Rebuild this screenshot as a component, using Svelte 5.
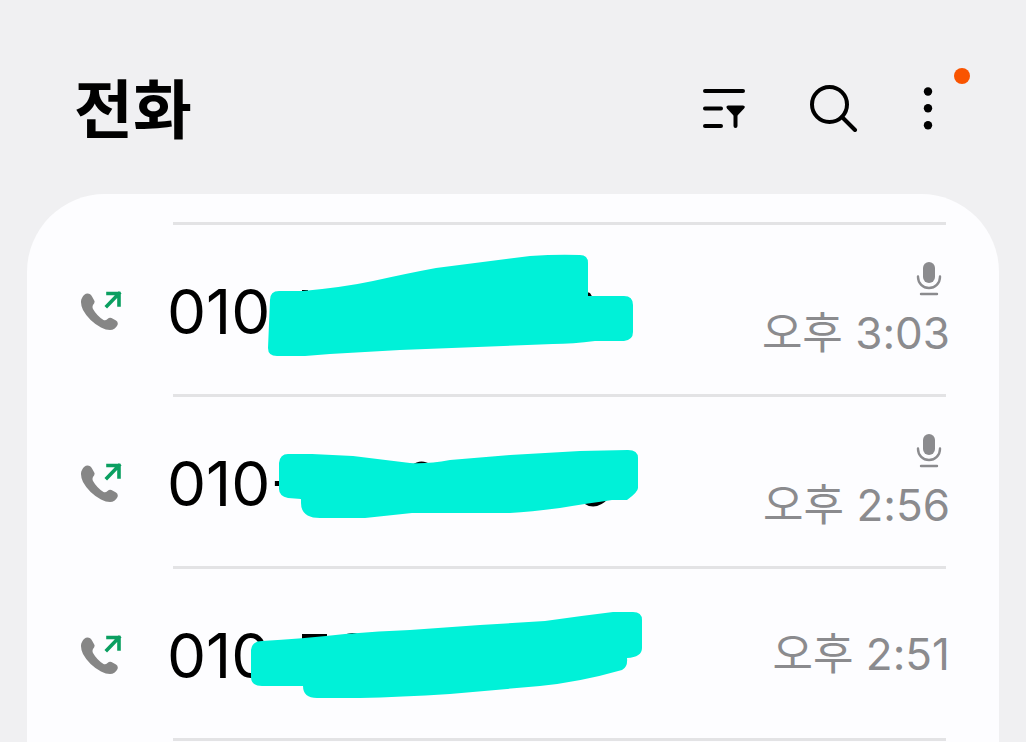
<script>
  const calls = [
    {
      id: 1,
      number: '010-',
      time: '오후 3:03',
      recorded: true,
      traces: 'M129 68H135V72H129Z M414 70L417 71L420 76H414Z',
      mask: 'M97 78Q97 69 106 69H130Q172 65 200 59Q236 51 263 46L357 34Q385 32 407 33Q415 33 415 41V74H451Q460 74 460 83V110Q460 118 451 119H422Q400 122 380 122L227 128L157 132L132 134H104Q95 134 95 126Z'
    },
    {
      id: 2,
      number: '010-',
      time: '오후 2:56',
      recorded: true,
      traces: 'M239 71Q248 64 259 71Z M410 109Q423 118 436 104Z M126 102H132V107H129Z',
      mask: 'M106 69Q107 60 115 60H139L180 62L237 69Q255 70 277 66L337 61L407 57L455 56Q465 56 465 64V94Q465 98 454 106H439Q417 109 387 114Q357 118 337 119H239L192 124H147Q128 124 128 109V105L115 104Q106 102 106 95Z'
    },
    {
      id: 3,
      number: '010-',
      time: '오후 2:51',
      recorded: false,
      traces: 'M129 68H154V74H129Z M170 70Q177 65 185 68V72Z',
      mask: 'M78 84Q79 75 89 75Q127 73 172 68Q207 65 237 64L307 59L372 55Q407 50 440 46H460Q469 46 469 54V82Q469 91 454 92Q455 101 449 104Q407 116 367 120L277 128Q227 131 187 132H144Q130 132 130 120H89Q78 120 78 111Z'
    }
  ];
</script>

<div class="page">
  <header class="header">
    <h1>전화</h1>
    <div class="actions">
      <button type="button" aria-label="필터">
        <svg width="48" height="48" viewBox="0 0 48 48">
          <path d="M5 7H43M5 24.500H21M5 42H21M35.500 30V42" fill="none" stroke="#000" stroke-width="4" stroke-linecap="round" />
          <path d="M28 21.500H43Q46 22 44 24.500L37.500 31.500H33.500L27 24.500Q25.500 22 28 21.500Z" />
        </svg>
      </button>
      <button type="button" aria-label="검색">
        <svg width="48" height="48" viewBox="0 0 48 48">
          <circle cx="19.500" cy="20.500" r="17.500" fill="none" stroke="#000" stroke-width="4" />
          <path d="M32 33L45 46" stroke="#000" stroke-width="4" stroke-linecap="round" />
        </svg>
      </button>
      <button type="button" class="more" aria-label="옵션 더보기">
        <svg width="16" height="48" viewBox="0 0 16 48">
          <circle cx="8" cy="7.500" r="4.200" />
          <circle cx="8" cy="24.300" r="4.200" />
          <circle cx="8" cy="41.200" r="4.200" />
        </svg>
        <span class="badge"></span>
      </button>
    </div>
  </header>

  <main class="card">
    <ul class="calls">
      {#each calls as call (call.id)}
        <li class="call">
          <svg class="outgoing" width="42" height="42" viewBox="0 0 42 42" aria-hidden="true">
            <path d="M2 8Q4 3.500 7.500 3.500Q10.500 3.500 12 6.500L14.500 11Q15 13 13 15Q12 17 13 19Q17 26 23.500 30Q25.500 31 27.500 29Q29.500 27 31.500 28L36 30.500Q38.500 32 37.500 35Q35 40 30 40Q26 40 21 37.500Q9 31 3 20Q-0.500 12 2 8Z" fill="#868686" />
            <path d="M28 3.500H39V15M39 3.500L27 16" fill="none" stroke="#0b9f61" stroke-width="3.600" stroke-linecap="square" />
          </svg>
          <div class="details">
            <span class="number">{call.number}</span>
            <svg class="redaction" width="500" height="172" viewBox="0 0 500 172" aria-hidden="true">
              <path d={call.traces} fill="#000" />
              <path d={call.mask} fill="#00f1d8" />
            </svg>
            <div class="meta">
              {#if call.recorded}
                <svg class="mic" width="26" height="34" viewBox="0 0 26 34" aria-hidden="true">
                  <rect x="7" y="0" width="12" height="21" rx="6" fill="#8b8b8e" />
                  <path d="M2 14.500V15A11 11 0 0 0 24 15V14.500M5 32H21" fill="none" stroke="#8b8b8e" stroke-width="2.400" stroke-linecap="round" />
                </svg>
              {/if}
              <time>{call.time}</time>
            </div>
          </div>
        </li>
      {/each}
    </ul>
  </main>
</div>

<style>
  :global(body) {
    margin: 0;
    background: #f0f0f2;
  }

  .page {
    display: flex;
    flex-direction: column;
    min-height: 100vh;
    font-family: Inter, 'Noto Sans CJK KR', sans-serif;
    color: #000;
  }

  .header {
    display: flex;
    align-items: center;
    justify-content: space-between;
    box-sizing: border-box;
    height: 194px;
    padding: 26px 90px 0 74px;
  }

  h1 {
    margin: 0;
    font-size: 64px;
    font-weight: 700;
    line-height: 80px;
  }

  .actions {
    display: flex;
    gap: 62px;
    padding-bottom: 4px;
  }

  button {
    position: relative;
    padding: 0;
    border: 0;
    background: none;
    cursor: pointer;
  }

  svg {
    display: block;
  }

  .badge {
    position: absolute;
    top: -16px;
    right: -34px;
    width: 16px;
    height: 16px;
    border-radius: 50%;
    background: #f95400;
  }

  .card {
    flex: 1;
    margin: 0 27px;
    padding: 28px 53px 0;
    border-radius: 78px 78px 0 0;
    background: #fdfdff;
  }

  .calls {
    margin: 0;
    padding: 0;
    list-style: none;
  }

  .call {
    display: flex;
    align-items: flex-start;
  }

  .outgoing {
    flex: none;
    margin: 68px 51px 0 0;
  }

  .details {
    position: relative;
    display: flex;
    flex: 1;
    align-items: center;
    justify-content: space-between;
    box-sizing: border-box;
    height: 172px;
    border-top: 3px solid #e3e3e5;
  }

  .call:last-child .details {
    height: 175px;
    border-bottom: 3px solid #e3e3e5;
  }

  .number {
    margin-left: -6px;
    padding-top: 4px;
    font-size: 62px;
    line-height: 76px;
  }

  .redaction {
    position: absolute;
    top: -3px;
    left: 0;
  }

  .meta {
    display: flex;
    flex-direction: column;
    align-items: flex-end;
    gap: 12px;
    margin-right: -4px;
    padding-top: 1px;
  }

  .mic {
    margin-right: 8px;
  }

  time {
    font-size: 44px;
    line-height: 50px;
    color: #8b8b8e;
  }
</style>
